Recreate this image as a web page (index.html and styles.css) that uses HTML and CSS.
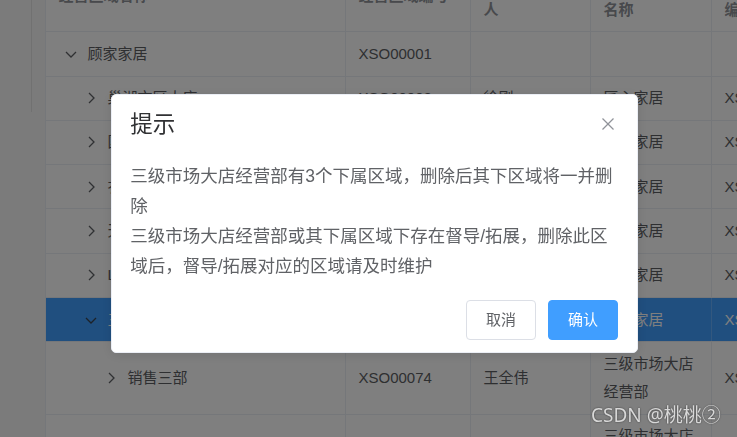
FILE: index.html
```html
<!DOCTYPE html>
<html lang="zh-CN">
<head>
  <meta charset="UTF-8">
  <title>经营区域</title>
  <link rel="stylesheet" href="styles.css">
</head>
<body>

  <div class="page">
    <div class="aside"><div class="aside-line"></div></div>
    <div class="main">
      <table class="grid">
        <colgroup>
          <col style="width:300px">
          <col style="width:125px">
          <col style="width:120px">
          <col style="width:121px">
          <col style="width:121px">
        </colgroup>
        <thead>
          <tr>
            <th>经营区域名称</th>
            <th>经营区域编号</th>
            <th>经营区域负责人</th>
            <th>所属上级区域名称</th>
            <th>所属上级区域编号</th>
          </tr>
        </thead>
        <tbody>
          <tr>
            <td><span class="expand"><svg width="12" height="12" viewBox="0 0 12 12"><polyline points="1,4 6,9 11,4"/></svg></span>顾家家居</td>
            <td>XSO00001</td>
            <td></td>
            <td></td>
            <td></td>
          </tr>
          <tr>
            <td><span class="indent"></span><span class="expand"><svg width="12" height="12" viewBox="0 0 12 12"><polyline points="4,1 9,6 4,11"/></svg></span>巢湖市区大店</td>
            <td>XSO00002</td>
            <td>徐刚</td>
            <td>匠心家居</td>
            <td>XSO00001</td>
          </tr>
          <tr>
            <td><span class="indent"></span><span class="expand"><svg width="12" height="12" viewBox="0 0 12 12"><polyline points="4,1 9,6 4,11"/></svg></span>国际家居城</td>
            <td>XSO00003</td>
            <td>李明</td>
            <td>顾家家居</td>
            <td>XSO00001</td>
          </tr>
          <tr>
            <td><span class="indent"></span><span class="expand"><svg width="12" height="12" viewBox="0 0 12 12"><polyline points="4,1 9,6 4,11"/></svg></span>衣柜定制区</td>
            <td>XSO00004</td>
            <td>张伟</td>
            <td>顾家家居</td>
            <td>XSO00001</td>
          </tr>
          <tr>
            <td><span class="indent"></span><span class="expand"><svg width="12" height="12" viewBox="0 0 12 12"><polyline points="4,1 9,6 4,11"/></svg></span>天鹅湖店</td>
            <td>XSO00005</td>
            <td>陈静</td>
            <td>顾家家居</td>
            <td>XSO00001</td>
          </tr>
          <tr>
            <td><span class="indent"></span><span class="expand"><svg width="12" height="12" viewBox="0 0 12 12"><polyline points="4,1 9,6 4,11"/></svg></span>Living展厅</td>
            <td>XSO00006</td>
            <td>刘洋</td>
            <td>顾家家居</td>
            <td>XSO00001</td>
          </tr>
          <tr class="current">
            <td><span class="indent"></span><span class="expand"><svg width="12" height="12" viewBox="0 0 12 12"><polyline points="1,4 6,9 11,4"/></svg></span>三级市场大店经营部</td>
            <td>XSO00070</td>
            <td>王全伟</td>
            <td>顾家家居</td>
            <td>XSO00001</td>
          </tr>
          <tr>
            <td><span class="indent"></span><span class="indent"></span><span class="expand"><svg width="12" height="12" viewBox="0 0 12 12"><polyline points="4,1 9,6 4,11"/></svg></span>销售三部</td>
            <td>XSO00074</td>
            <td>王全伟</td>
            <td>三级市场大店经营部</td>
            <td>XSO00070</td>
          </tr>
          <tr>
            <td><span class="indent"></span><span class="indent"></span><span class="expand"><svg width="12" height="12" viewBox="0 0 12 12"><polyline points="4,1 9,6 4,11"/></svg></span>销售四部</td>
            <td>XSO00075</td>
            <td>王全伟</td>
            <td>三级市场大店经营部</td>
            <td>XSO00070</td>
          </tr>
        </tbody>
      </table>
    </div>
  </div>

  <div class="mask"></div>

  <div class="msgbox-wrap">
    <div class="msgbox">
      <div class="msgbox-header">
        <span class="msgbox-title">提示</span>
        <span class="msgbox-close">
          <svg width="12" height="12" viewBox="0 0 12 12"><line x1="0.5" y1="0.5" x2="11.5" y2="11.5"/><line x1="11.5" y1="0.5" x2="0.5" y2="11.5"/></svg>
        </span>
      </div>
      <div class="msgbox-content">
        <p>三级市场大店经营部有3个下属区域，删除后其下区域将一并删除</p>
        <p>三级市场大店经营部或其下属区域下存在督导/拓展，删除此区域后，督导/拓展对应的区域请及时维护</p>
      </div>
      <div class="msgbox-btns">
        <button class="btn">取消</button>
        <button class="btn btn-primary">确认</button>
      </div>
    </div>
  </div>

  <div class="watermark">CSDN @桃桃②</div>

</body>
</html>
```

FILE: styles.css
```css
html, body { margin: 0; padding: 0; overflow: hidden; }
body { font-family: "Liberation Sans", "Noto Sans CJK SC", sans-serif; background: #f6f6f6; color: #606266; }

.page { display: flex; height: 437px; }
.aside { width: 32px; flex: none; }
.aside-line { height: 112px; border-right: 1px solid #e2e2e2; }
.main { flex: 1; padding-left: 13px; background: #f6f6f6; min-width: 0; }

.grid { table-layout: fixed; border-collapse: collapse; width: 787px; margin-top: -40px; background: #fff; border-left: 1px solid #ebeef5; font-size: 15px; }
.grid th, .grid td { padding: 7.65px 12.5px; line-height: 28px; border-bottom: 1px solid #ebeef5; border-right: 1px solid #ebeef5; text-align: left; vertical-align: middle; word-break: break-all; }
.grid th { color: #909399; font-weight: bold; }
.grid td { color: #5c5e63; }
.grid tr.current td { background: #409eff; color: #fff; border-right-color: #66b1ff; }

.indent { display: inline-block; width: 20px; }
.expand { display: inline-flex; width: 25px; height: 28px; align-items: center; justify-content: center; vertical-align: top; margin-right: 4px; }
.expand svg polyline { fill: none; stroke: #606266; stroke-width: 1.3; }
.current .expand svg polyline { stroke: #3a4450; }

.mask { position: fixed; top: 0; left: 0; right: 0; bottom: 0; background: rgba(0, 0, 0, 0.5); }

.msgbox-wrap { position: fixed; top: 0; left: 0; right: 0; bottom: 0; display: flex; align-items: center; justify-content: center; padding: 10px 0 0 11px; }
.msgbox { width: 525px; background: #fff; border: 1px solid #ebeef5; border-radius: 5px; padding-bottom: 12.5px; box-shadow: 0 2px 12px rgba(0, 0, 0, 0.1); }
.msgbox-header { position: relative; padding: 18.75px 18.75px 12.5px; }
.msgbox-title { display: block; font-size: 22.5px; line-height: 1; color: #303133; }
.msgbox-close { position: absolute; top: 18.75px; right: 18.75px; width: 20px; height: 20px; display: flex; align-items: center; justify-content: center; }
.msgbox-close svg line { stroke: #909399; stroke-width: 1.3; }
.msgbox-content { padding: 12.5px 18.75px; font-size: 17.5px; line-height: 30px; color: #606266; }
.msgbox-content p { margin: 0; }
.msgbox-btns { display: flex; justify-content: flex-end; gap: 12.5px; padding: 6.25px 18.75px 0; }

.btn { font-family: "Liberation Sans", "Noto Sans CJK SC", sans-serif; font-size: 15px; line-height: 1; padding: 11.25px 18.75px; border: 1px solid #dcdfe6; border-radius: 4px; background: #fff; color: #606266; }
.btn-primary { background: #409eff; border-color: #409eff; color: #fff; }

.watermark { position: fixed; left: 591px; top: 403px; font-family: "Noto Sans", "Noto Sans CJK SC", sans-serif; font-size: 19px; line-height: 24px; color: #d8d8d8; text-shadow: 0 0 2px rgba(0, 0, 0, 0.6); }
```
